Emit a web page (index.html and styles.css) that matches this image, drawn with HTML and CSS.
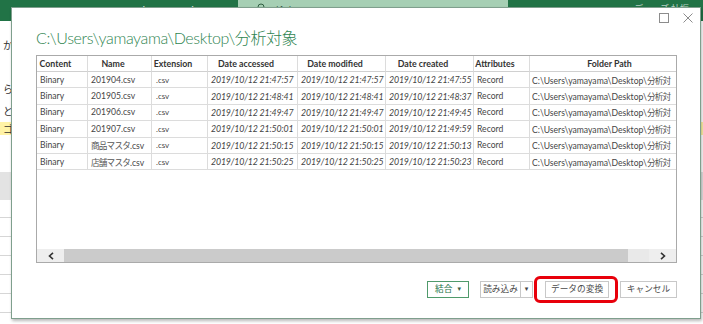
FILE: index.html
```html
<!DOCTYPE html>
<html lang="ja">
<head>
<meta charset="utf-8">
<title>C:\Users\yamayama\Desktop\分析対象</title>
<link rel="stylesheet" href="styles.css">
</head>
<body>
<div class="excel">
  <div class="titlebar">
    <div class="app-title">Book1 - Excel</div>
    <div class="searchbox">
      <svg class="search-ico" width="10" height="10" viewBox="0 0 10 10"><circle cx="4" cy="4" r="3" fill="none" stroke="#2f5d40" stroke-width="1"/><line x1="6.2" y1="6.2" x2="9" y2="9" stroke="#2f5d40" stroke-width="1"/></svg>
      <span class="search-text">検索</span>
    </div>
    <div class="user">ディーズ 杜振</div>
  </div>
  <div class="sheet">
    <div class="s-gap g1"></div>
    <div class="s-text">か</div>
    <div class="s-gap g2"></div>
    <div class="s-text">ら</div>
    <div class="s-gap g3"></div>
    <div class="s-text">と</div>
    <div class="s-gap g4"></div>
    <div class="s-text s-yellow">ゴ</div>
    <div class="s-gap g5"></div>
    <div class="s-gray"></div>
    <div class="s-gap g6"></div>
    <div class="s-row"></div>
    <div class="s-row"></div>
    <div class="s-row"></div>
    <div class="s-row"></div>
    <div class="s-row"></div>
    <div class="s-row"></div>
  </div>
</div>

<div class="dialog">
  <div class="winctl">
    <svg width="10" height="10" viewBox="0 0 10 10"><rect x="0.5" y="0.5" width="9" height="9" fill="none" stroke="#8c8c8c" stroke-width="1"/></svg>
    <svg width="10" height="10" viewBox="0 0 10 10"><path d="M0.5 0.5 L9.5 9.5 M9.5 0.5 L0.5 9.5" fill="none" stroke="#8c8c8c" stroke-width="1"/></svg>
  </div>
  <h1 class="title">C:\Users\yamayama\Desktop\分析対象</h1>
  <div class="grid">
    <div class="grid-body">
      <table class="data">
        <thead>
          <tr>
            <th class="c1">Content</th>
            <th class="c2">Name</th>
            <th class="c3">Extension</th>
            <th class="c4">Date accessed</th>
            <th class="c5">Date modified</th>
            <th class="c6">Date created</th>
            <th class="c7">Attributes</th>
            <th class="c8">Folder Path</th>
          </tr>
        </thead>
        <tbody>
          <tr><td>Binary</td><td>201904.csv</td><td class="ext">.csv</td><td class="dt">2019/10/12 21:47:57</td><td class="dt">2019/10/12 21:47:57</td><td class="dt">2019/10/12 21:47:55</td><td>Record</td><td class="path">C:\Users\yamayama\Desktop\<span class="jp">分析対</span></td></tr>
          <tr><td>Binary</td><td>201905.csv</td><td class="ext">.csv</td><td class="dt">2019/10/12 21:48:41</td><td class="dt">2019/10/12 21:48:41</td><td class="dt">2019/10/12 21:48:37</td><td>Record</td><td class="path">C:\Users\yamayama\Desktop\<span class="jp">分析対</span></td></tr>
          <tr><td>Binary</td><td>201906.csv</td><td class="ext">.csv</td><td class="dt">2019/10/12 21:49:47</td><td class="dt">2019/10/12 21:49:47</td><td class="dt">2019/10/12 21:49:45</td><td>Record</td><td class="path">C:\Users\yamayama\Desktop\<span class="jp">分析対</span></td></tr>
          <tr><td>Binary</td><td>201907.csv</td><td class="ext">.csv</td><td class="dt">2019/10/12 21:50:01</td><td class="dt">2019/10/12 21:50:01</td><td class="dt">2019/10/12 21:49:59</td><td>Record</td><td class="path">C:\Users\yamayama\Desktop\<span class="jp">分析対</span></td></tr>
          <tr><td>Binary</td><td><span class="jp">商品マスタ</span>.csv</td><td class="ext">.csv</td><td class="dt">2019/10/12 21:50:15</td><td class="dt">2019/10/12 21:50:15</td><td class="dt">2019/10/12 21:50:13</td><td>Record</td><td class="path">C:\Users\yamayama\Desktop\<span class="jp">分析対</span></td></tr>
          <tr><td>Binary</td><td><span class="jp">店舗マスタ</span>.csv</td><td class="ext">.csv</td><td class="dt">2019/10/12 21:50:25</td><td class="dt">2019/10/12 21:50:25</td><td class="dt">2019/10/12 21:50:23</td><td>Record</td><td class="path">C:\Users\yamayama\Desktop\<span class="jp">分析対</span></td></tr>
        </tbody>
      </table>
    </div>
    <div class="hscroll">
      <div class="sb-arrow">
        <svg width="6" height="8" viewBox="0 0 6 8"><polyline points="5,0.8 1.5,4 5,7.2" fill="none" stroke="#333" stroke-width="1.6"/></svg>
      </div>
      <div class="sb-thumb"></div>
      <div class="sb-track"></div>
      <div class="sb-arrow">
        <svg width="6" height="8" viewBox="0 0 6 8"><polyline points="1,0.8 4.5,4 1,7.2" fill="none" stroke="#333" stroke-width="1.6"/></svg>
      </div>
    </div>
  </div>
  <div class="actions">
    <button class="btn btn-green">結合 <span class="caret">▾</span></button>
    <div class="split">
      <button class="btn btn-main">読み込み</button>
      <button class="btn btn-drop"><span class="caret">▾</span></button>
    </div>
    <div class="highlight">
      <button class="btn btn-transform">データの変換</button>
    </div>
    <button class="btn btn-cancel">キャンセル</button>
  </div>
</div>
</body>
</html>
```

FILE: styles.css
```css
* { box-sizing: border-box; }
html, body { margin: 0; padding: 0; }
body {
  width: 703px;
  height: 324px;
  overflow: hidden;
  position: relative;
  background: #ffffff;
  font-family: Lato, "Noto Sans CJK JP", sans-serif;
}

/* ---------- Excel window behind ---------- */
.titlebar {
  height: 21px;
  background: #217346;
  display: flex;
  align-items: flex-start;
}
.app-title {
  width: 238px;
  padding-left: 120px;
  padding-top: 3px;
  font-size: 12px;
  color: rgba(255,255,255,0.85);
  font-family: "Noto Sans", sans-serif;
}
.searchbox {
  width: 270px;
  height: 19px;
  background: #a6cfb4;
  display: flex;
  align-items: flex-start;
  padding: 3px 0 0 19px;
  gap: 8px;
}
.search-text {
  font-size: 10px;
  color: #2f4f3a;
  font-family: "Noto Sans CJK JP", sans-serif;
}
.user {
  margin-left: auto;
  padding: 2px 14px 0 0;
  font-size: 9px;
  color: rgba(255,255,255,0.7);
  font-family: "Noto Sans CJK JP", sans-serif;
}
.sheet {
  display: flex;
  flex-direction: column;
}
.s-gap.g1 { height: 17px; }
.s-gap.g2 { height: 30px; }
.s-gap.g3 { height: 8px; }
.s-gap.g4 { height: 4px; }
.s-gap.g5 { height: 37px; }
.s-gap.g6 { height: 17px; }
.s-text {
  height: 14px;
  line-height: 14px;
  padding-left: 3px;
  font-size: 10px;
  color: #333;
  font-family: "Noto Sans CJK JP", sans-serif;
  white-space: nowrap;
  overflow: hidden;
}
.s-yellow {
  height: 13px;
  line-height: 13px;
  background: #fff3a6;
}
.s-gray {
  height: 28px;
  background: #e3e3e3;
}
.s-row {
  height: 19px;
  border-top: 1px solid #d6d6d6;
}

/* ---------- Dialog ---------- */
.dialog {
  position: absolute;
  left: 11px;
  top: 7px;
  width: 690px;
  height: 312px;
  background: #ffffff;
  border: 1px solid #7f9f8d;
  box-shadow: 1px 2px 3px rgba(0,0,0,0.28);
  display: flex;
  flex-direction: column;
  padding: 5px 23px 0 24px;
}
.winctl {
  display: flex;
  justify-content: flex-end;
  gap: 14px;
  height: 10px;
  margin-right: -16px;
}
.winctl svg { display: block; }
.title {
  margin: 5px 0 7px 0;
  height: 20px;
  line-height: 20px;
  font-size: 16px;
  font-weight: 300;
  letter-spacing: -0.4px;
  color: #2f8551;
  white-space: nowrap;
  font-family: Lato, "Noto Sans CJK JP", sans-serif;
}

.grid {
  height: 208px;
  border: 1px solid #aaaaaa;
  display: flex;
  flex-direction: column;
}
.grid-body {
  flex: 1;
  overflow: hidden;
}
.data {
  border-collapse: separate;
  border-spacing: 0;
  table-layout: fixed;
  width: 666px;
  font-size: 8.6px;
  color: #454545;
}
.data th, .data td {
  border-right: 1px solid #dcdcdc;
  border-bottom: 1px solid #dcdcdc;
  white-space: nowrap;
  overflow: hidden;
  padding: 0 0 0 3px;
  text-align: left;
  vertical-align: middle;
}
.data th {
  height: 16px;
  font-weight: 700;
  font-size: 8.8px;
  color: #333;
  text-align: center;
  padding: 0 13px 0 0;
  border-bottom-color: #d0d0d0;
}
.data td { height: 16.4px; }
.data td:first-child { padding-left: 3px; }
.c1 { width: 51px; }
.c2 { width: 64px; }
.c3 { width: 56px; }
.c4 { width: 90px; }
.c5 { width: 88px; }
.c6 { width: 88px; }
.c7 { width: 56px; }
.c8 { width: 173px; }
.data td.dt {
  font-style: italic;
  font-size: 8.8px;
  padding-left: 3px;
  letter-spacing: -0.15px;
  text-overflow: clip;
}
.data td.ext { font-size: 8px; padding-left: 4px; }
.data td.path { padding-left: 2px; }
.data .jp {
  font-family: "Noto Sans CJK JP", sans-serif;
  font-size: 8.6px;
  letter-spacing: -0.8px;
  color: #555;
}

.hscroll {
  height: 13px;
  display: flex;
  background: #e9e9e9;
}
.sb-arrow {
  width: 27px;
  display: flex;
  align-items: center;
  justify-content: center;
  background: #eeeeee;
}
.sb-arrow svg { display: block; }
.sb-thumb {
  width: 564px;
  background: #cbcbcb;
}
.sb-track { flex: 1; }

/* ---------- Buttons ---------- */
.actions {
  margin-top: 13px;
  display: flex;
  justify-content: flex-end;
  align-items: center;
  height: 27px;
}
.btn {
  height: 17px;
  border: 1px solid #c8c8c8;
  background: #ffffff;
  font-family: "Noto Sans CJK JP", sans-serif;
  font-size: 8.7px;
  color: #4a4a4a;
  padding: 0;
  margin: 0;
  display: flex;
  align-items: center;
  justify-content: center;
  line-height: 1;
}
.caret {
  font-size: 7px;
  color: #444;
  font-family: "DejaVu Sans", sans-serif;
}
.btn-green {
  width: 42px;
  border-color: #4f9a6b;
  color: #217346;
  gap: 5px;
  margin-right: 11px;
}
.btn-green .caret { color: #3b5f48; }
.split { display: flex; margin-right: 1px; }
.btn-main { width: 41px; }
.btn-drop { width: 12px; border-left: none; }
.highlight {
  border: 3px solid #e8000b;
  border-radius: 6px;
  padding: 2px 6px 2px 8px;
  margin-right: 2px;
}
.btn-transform { width: 64px; }
.btn-cancel { width: 57px; }
```
